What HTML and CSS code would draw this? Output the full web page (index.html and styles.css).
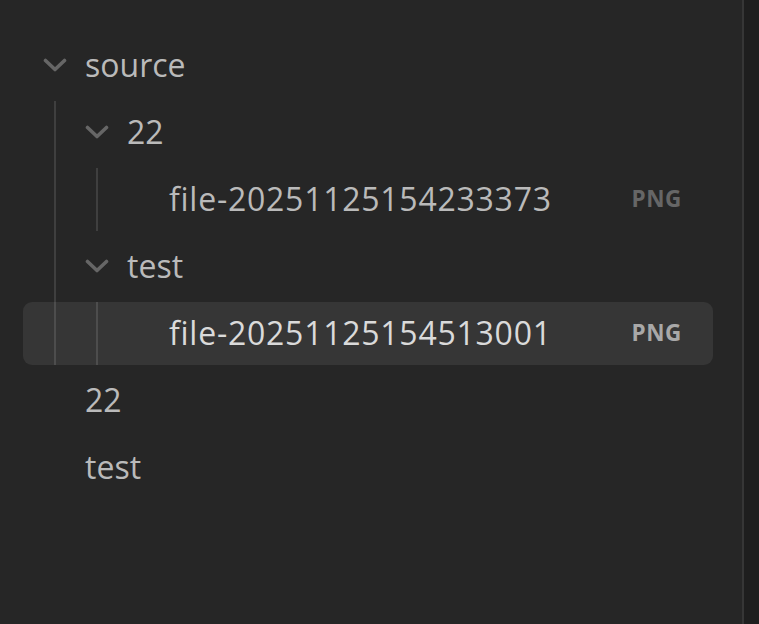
FILE: index.html
```html
<!DOCTYPE html>
<html>
<head>
<meta charset="utf-8">
<link rel="stylesheet" href="styles.css">
</head>
<body>
<div class="panel">
  <div class="tree">
    <div class="item">
      <div class="row folder">
        <svg class="chev" viewBox="0 0 24 14"><path d="M2.5 2.5 L12 11.5 L21.5 2.5"/></svg>
        <span class="name">source</span>
      </div>
      <div class="children">
        <div class="item">
          <div class="row folder d1">
            <svg class="chev" viewBox="0 0 24 14"><path d="M2.5 2.5 L12 11.5 L21.5 2.5"/></svg>
            <span class="name">22</span>
          </div>
          <div class="children">
            <div class="row file d2">
              <span class="name">file-20251125154233373</span>
              <span class="tag">PNG</span>
            </div>
          </div>
        </div>
        <div class="item">
          <div class="row folder d1">
            <svg class="chev" viewBox="0 0 24 14"><path d="M2.5 2.5 L12 11.5 L21.5 2.5"/></svg>
            <span class="name">test</span>
          </div>
          <div class="children">
            <div class="row file d2 active">
              <span class="name">file-20251125154513001</span>
              <span class="tag">PNG</span>
            </div>
          </div>
        </div>
      </div>
    </div>
    <div class="row file-top">
      <span class="name">22</span>
    </div>
    <div class="row file-top">
      <span class="name">test</span>
    </div>
  </div>
</div>
<div class="side"></div>
</body>
</html>
```
FILE: styles.css
```css
html, body {
  margin: 0;
  padding: 0;
  height: 100%;
}
body {
  background: #1e1e1e;
  display: flex;
  font-family: "Open Sans", "Noto Sans", sans-serif;
  overflow: hidden;
}
.panel {
  width: 742px;
  height: 624px;
  background: #262626;
  border-right: 2px solid #363636;
  flex: none;
}
.side {
  flex: 1;
}
.tree {
  padding: 34px 29px 0 23px;
}
.row {
  height: 63px;
  margin-bottom: 4px;
  display: flex;
  align-items: center;
  border-radius: 9px;
  padding-left: 20px;
  padding-right: 31px;
  padding-bottom: 3px;
  color: #bababa;
  font-size: 32px;
  box-sizing: border-box;
}
.chev {
  width: 24px;
  height: 14px;
  flex: none;
  margin-right: 18px;
  margin-top: 2px;
  fill: none;
  stroke: #666666;
  stroke-width: 3.6;
  stroke-linecap: round;
  stroke-linejoin: round;
}
.file-top {
  padding-left: 62px;
}
.children {
  margin-left: 31px;
  border-left: 2px solid #3f3f3f;
  padding-left: 9px;
}
.row.d1 {
  margin-left: -42px;
  padding-left: 62px;
}
.row.d2 {
  margin-left: -84px;
  padding-left: 146px;
}
.name {
  flex: 1;
  white-space: nowrap;
}
.file .name {
  letter-spacing: 0.75px;
}
.tag {
  font-size: 22.5px;
  font-weight: 700;
  color: #666666;
  letter-spacing: 0.6px;
}
.row.active {
  background: rgba(255, 255, 255, 0.075);
  color: #dadada;
}
.row.active .tag {
  color: #a8a8a8;
}
```
